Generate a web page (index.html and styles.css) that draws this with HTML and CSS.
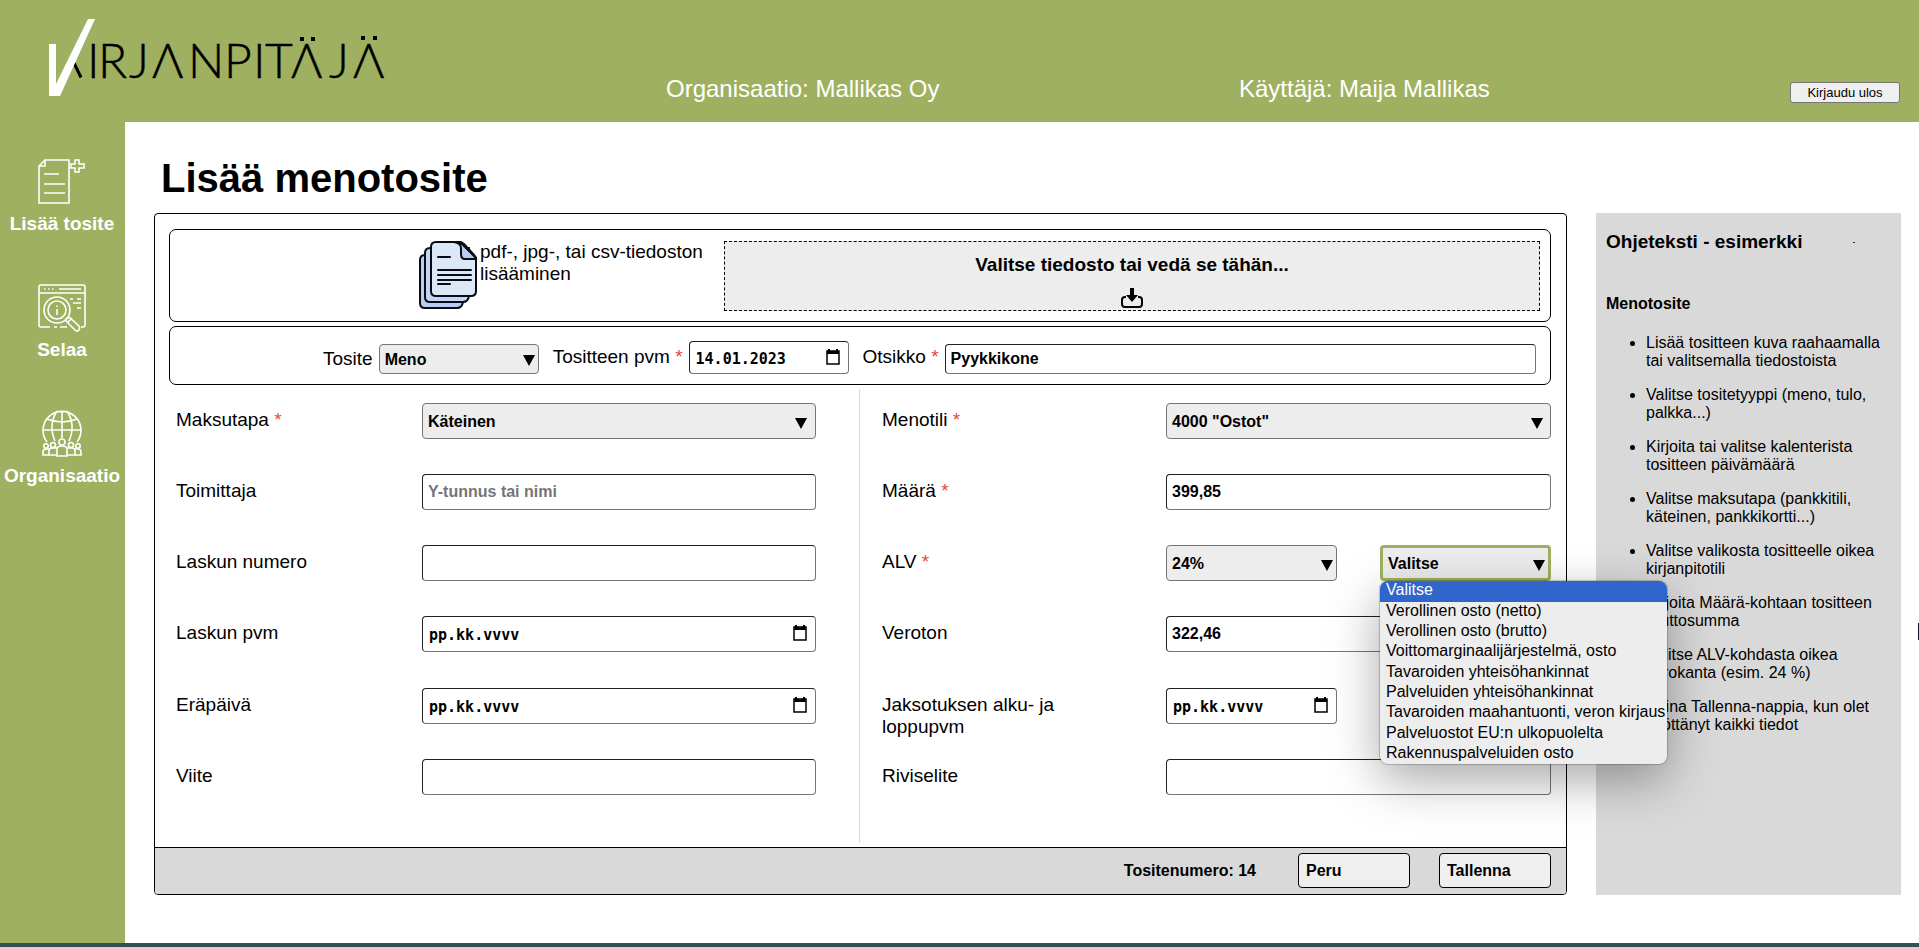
FILE: index.html
```html
<!DOCTYPE html>
<html lang="fi">
<head>
<meta charset="utf-8">
<title>Kirjanpitäjä – Lisää menotosite</title>
<link rel="stylesheet" href="styles.css">
</head>
<body>
<header class="topbar">
  <a class="logo" href="#" aria-label="Kirjanpitäjä">
    <svg width="350" height="90" viewBox="40 12 350 90">
      <path class="logo-leg" d="M74 63L81 77.500"/>
      <path class="logo-check" d="M49 44H56V84L88 19H95L60 96H49Z"/>
      <text class="logo-text" y="78" x="87 98 129 152 188 224 253 265 291 329 353">IRJΛNPITΛJΛ</text>
      <path d="M300 37h4v4h-4zM311 37h4v4h-4zM361 36h4v4h-4zM373 36h4v4h-4z"/>
    </svg>
  </a>
  <p class="topbar-info topbar-org">Organisaatio: Mallikas Oy</p>
  <p class="topbar-info topbar-user">Käyttäjä: Maija Mallikas</p>
  <button class="logout" type="button">Kirjaudu ulos</button>
</header>

<div class="body">
  <nav class="sidebar">
    <a class="nav-item" href="#">
      <svg class="nav-icon" width="48" height="48" viewBox="0 0 48 48">
        <path d="M7 2H31V45H1V8ZM7 2V8H1M6 16H21M6 26H27M6 35H27"/>
        <path d="M37 2h4v4h5v4h-5v4h-4v-4h-4v-4h4z"/>
      </svg>
      <span>Lisää tosite</span>
    </a>
    <a class="nav-item" href="#">
      <svg class="nav-icon" width="48" height="48" viewBox="0 0 48 48">
        <path d="M12 43H3Q1 43 1 41V3Q1 1 3 1H45Q47 1 47 3V41Q47 43 45 43H43M1 9H47M21 5H43M6 5h1.500M10 5h1.500M14 5h1.500M16 43h3M22 43H29"/>
        <circle cx="19" cy="26" r="13"/><circle cx="19" cy="26" r="9"/>
        <path d="M19 25V31M19 21.500V23M28 35L31 33L41 42Q42 44 41 46Q39 48 37 46L28 37ZM30 38L34 34M32 15h3M39 15h4M35 19H43M39 24H43"/>
      </svg>
      <span>Selaa</span>
    </a>
    <a class="nav-item" href="#">
      <svg class="nav-icon" width="48" height="48" viewBox="0 0 48 48">
        <path d="M9 32A19 19 0 1 1 39 32M24 1V28M5 20H43M9 9Q24 15 39 9M19 1Q10 15 17 31M29 1Q38 15 31 31"/>
        <circle cx="24" cy="32" r="3"/><path d="M19 46V39Q19 36 24 36Q29 36 29 39V46Z"/>
        <circle cx="15" cy="35" r="2.500"/><path d="M19 38H14Q11 38 11 41V45H19"/>
        <circle cx="33" cy="35" r="2.500"/><path d="M29 38H34Q37 38 37 41V45H29"/>
        <circle cx="8" cy="36" r="2.200"/><path d="M11 39H8Q5 39 5 42V45H11"/>
        <circle cx="40" cy="36" r="2.200"/><path d="M37 39H40Q43 39 43 42V45H37"/>
      </svg>
      <span>Organisaatio</span>
    </a>
  </nav>

  <main class="main">
    <h1 class="title">Lisää menotosite</h1>
    <div class="columns">
      <form class="voucher">
        <div class="voucher-body">
          <section class="box upload">
            <svg class="files-icon" width="58" height="68" viewBox="0 0 58 68">
              <g stroke="#0b0b14" stroke-width="2">
                <path fill="#b9cdf3" d="M6 14Q1 14 1 19V62Q1 67 6 67H38Q43 67 44 61V14Z"/>
                <path fill="#c4d6f7" d="M11 7Q6 7 6 12V56Q6 61 11 61H44Q49 61 50 55V7Z"/>
                <path fill="#dce8f8" d="M17 1H41L57 17V50Q57 55 52 55H17Q12 55 12 50V6Q12 1 17 1Z"/>
                <path fill="#b9cdf3" d="M35 1H41L57 17V18H46Q42 18 42 13V7Q42 2 35 1Z"/>
                <path fill="none" stroke-linecap="round" d="M19 16H31M19 29H52M19 34H52M19 39H52M19 43H31"/>
              </g>
              <path fill="#fff" d="M45 0H58V14Z"/>
              <path fill="none" stroke="#0b0b14" stroke-width="2" d="M40 1Q43 1 45 3L55 14Q57 16 57 19"/>
            </svg>
            <p class="upload-hint">pdf-, jpg-, tai csv-tiedoston lisääminen</p>
            <button class="dropzone" type="button">
              <span>Valitse tiedosto tai vedä se tähän...</span>
              <svg width="22" height="20" viewBox="0 0 22 20">
                <path fill="none" stroke="#000" stroke-width="2" d="M5 9H4Q1 9 1 12V16Q1 19 4 19H18Q21 19 21 16V12Q21 9 18 9H17"/>
                <path d="M9 0h4v7h4l-6 7-6-7h4z"/>
              </svg>
            </button>
          </section>

          <section class="box summary">
            <label for="tosite">Tosite</label>
            <select class="control select control-small" id="tosite"><option>Meno</option></select>
            <label class="summary-next" for="pvm">Tositteen pvm <span class="req">*</span></label>
            <span class="date control-small"><input class="control" id="pvm" value="14.01.2023"><svg class="cal" viewBox="0 0 14 16"><path d="M1 2h12v13H1z"/><path class="cal-fill" d="M1 2h12v3H1zM2 0h2v2H2zM10 0h2v2h-2z"/></svg></span>
            <label class="summary-next" for="otsikko">Otsikko <span class="req">*</span></label>
            <input class="control control-title" id="otsikko" value="Pyykkikone">
          </section>

          <div class="fields">
            <div class="field-col field-col-left">
              <div class="field"><label for="maksutapa">Maksutapa <span class="req">*</span></label>
                <select class="control select" id="maksutapa"><option>Käteinen</option></select></div>
              <div class="field"><label for="toimittaja">Toimittaja</label>
                <input class="control" id="toimittaja" placeholder="Y-tunnus tai nimi"></div>
              <div class="field"><label for="laskunro">Laskun numero</label>
                <input class="control" id="laskunro"></div>
              <div class="field"><label for="laskupvm">Laskun pvm</label>
                <span class="date"><input class="control" id="laskupvm" value="pp.kk.vvvv"><svg class="cal" viewBox="0 0 14 16"><path d="M1 2h12v13H1z"/><path class="cal-fill" d="M1 2h12v3H1zM2 0h2v2H2zM10 0h2v2h-2z"/></svg></span></div>
              <div class="field"><label for="erapaiva">Eräpäivä</label>
                <span class="date"><input class="control" id="erapaiva" value="pp.kk.vvvv"><svg class="cal" viewBox="0 0 14 16"><path d="M1 2h12v13H1z"/><path class="cal-fill" d="M1 2h12v3H1zM2 0h2v2H2zM10 0h2v2h-2z"/></svg></span></div>
              <div class="field"><label for="viite">Viite</label>
                <input class="control" id="viite"></div>
            </div>
            <div class="field-col field-col-right">
              <div class="field"><label for="menotili">Menotili <span class="req">*</span></label>
                <select class="control select" id="menotili"><option>4000 "Ostot"</option></select></div>
              <div class="field"><label for="maara">Määrä <span class="req">*</span></label>
                <input class="control" id="maara" value="399,85"></div>
              <div class="field"><label for="alv">ALV <span class="req">*</span></label>
                <div class="pair">
                  <select class="control select" id="alv"><option>24%</option></select>
                  <div class="dropdown">
                    <select class="control select select-open" id="alvtyyppi" aria-label="ALV-tyyppi"><option>Valitse</option></select>
                    <ul class="menu" role="listbox">
                      <li class="menu-item menu-item-active" role="option">Valitse</li>
                      <li class="menu-item" role="option">Verollinen osto (netto)</li>
                      <li class="menu-item" role="option">Verollinen osto (brutto)</li>
                      <li class="menu-item" role="option">Voittomarginaalijärjestelmä, osto</li>
                      <li class="menu-item" role="option">Tavaroiden yhteisöhankinnat</li>
                      <li class="menu-item" role="option">Palveluiden yhteisöhankinnat</li>
                      <li class="menu-item" role="option">Tavaroiden maahantuonti, veron kirjaus</li>
                      <li class="menu-item" role="option">Palveluostot EU:n ulkopuolelta</li>
                      <li class="menu-item" role="option">Rakennuspalveluiden osto</li>
                    </ul>
                  </div>
                </div></div>
              <div class="field"><label for="veroton">Veroton</label>
                <input class="control" id="veroton" value="322,46"></div>
              <div class="field"><label for="jakso1">Jaksotuksen alku- ja loppupvm</label>
                <div class="pair">
                  <span class="date"><input class="control" id="jakso1" value="pp.kk.vvvv"><svg class="cal" viewBox="0 0 14 16"><path d="M1 2h12v13H1z"/><path class="cal-fill" d="M1 2h12v3H1zM2 0h2v2H2zM10 0h2v2h-2z"/></svg></span>
                  <input class="control" aria-label="Jaksotuksen loppupvm">
                </div></div>
              <div class="field"><label for="riviselite">Riviselite</label>
                <input class="control" id="riviselite"></div>
            </div>
          </div>
        </div>
        <footer class="voucher-footer">
          <span class="voucher-number">Tositenumero: 14</span>
          <button class="action" type="button">Peru</button>
          <button class="action" type="button">Tallenna</button>
        </footer>
      </form>

      <aside class="help">
        <div class="help-head"><h2 class="help-title">Ohjeteksti - esimerkki</h2><i class="help-dot"></i></div>
        <h3 class="help-subtitle">Menotosite</h3>
        <ul class="help-list">
          <li>Lisää tositteen kuva raahaamalla tai valitsemalla tiedostoista</li>
          <li>Valitse tositetyyppi (meno, tulo, palkka...)</li>
          <li>Kirjoita tai valitse kalenterista tositteen päivämäärä</li>
          <li>Valitse maksutapa (pankkitili, käteinen, pankkikortti...)</li>
          <li>Valitse valikosta tositteelle oikea kirjanpitotili</li>
          <li>Kirjoita Määrä-kohtaan tositteen bruttosumma</li>
          <li>Valitse ALV-kohdasta oikea verokanta (esim. 24 %)</li>
          <li>Paina Tallenna-nappia, kun olet syöttänyt kaikki tiedot</li>
        </ul>
      </aside>
    </div>
  </main>
</div>
<i class="edge-handle"></i>
</body>
</html>
```
FILE: styles.css
```css
*, *::before, *::after { box-sizing: border-box; }

body {
  margin: 0;
  min-height: 100vh;
  display: flex;
  flex-direction: column;
  border-bottom: 4px solid #2f5350;
  background: #fff;
  color: #000;
  font: 16px/18px "Liberation Sans", Arial, sans-serif;
}

h1, h2, h3, p, ul { margin: 0; padding: 0; }
button, input, select { font-family: inherit; color: inherit; }

/* Header */
.topbar {
  height: 122px;
  padding: 0 19px 0 40px;
  display: grid;
  grid-template-columns: 626fr 573fr 551fr 110px;
  align-items: start;
  background: #9fb160;
  color: #fff;
}
.logo { padding-top: 12px; }
.logo svg { display: block; }
.logo-check { fill: #fff; }
.logo-leg { stroke: #000; stroke-width: 3; }
.logo-text { font: 300 48px Lato, sans-serif; fill: #000; stroke: #000; stroke-width: .5; }
.topbar-info { padding-top: 75px; font-size: 24px; line-height: 28px; }
.logout {
  margin-top: 82px;
  height: 21px;
  padding: 0;
  border: 1px solid #767676;
  border-radius: 3px;
  background: #efefef;
  color: #000;
  font-size: 13px;
}

/* Sidebar */
.body { flex: 1; display: flex; }
.sidebar {
  flex: 0 0 125px;
  padding: 36px 1px 0 0;
  display: flex;
  flex-direction: column;
  gap: 49px;
  background: #9fb160;
}
.nav-item {
  display: flex;
  flex-direction: column;
  align-items: center;
  gap: 7px;
  color: #fff;
  font-size: 19px;
  line-height: 22px;
  font-weight: bold;
  text-decoration: none;
}
.nav-icon { fill: none; stroke: #fff; stroke-width: 1.6; }

/* Page */
.main {
  flex: 1;
  min-width: 0;
  padding: 33px 18px 48px 29px;
  display: flex;
  flex-direction: column;
}
.title { padding: 0 7px 12px; font-size: 40px; line-height: 46px; }
.columns { flex: 1; display: flex; gap: 29px; }

.voucher {
  flex: 1;
  display: flex;
  flex-direction: column;
  border: 1px solid #000;
  border-radius: 4px;
}
.voucher-body {
  flex: 1;
  padding: 15px 15px 4px 14px;
  display: flex;
  flex-direction: column;
  gap: 4px;
}
.box { display: flex; border: 1px solid #000; border-radius: 7px; }

/* Upload row */
.upload { height: 93px; padding: 11px 10px 10px 249px; }
.upload-hint {
  width: 247px;
  padding: 0 0 0 3px;
  font-size: 19px;
  line-height: 22px;
}
.files-icon { flex: none; }
.dropzone {
  flex: 1;
  height: 70px;
  padding: 12px 0 0;
  display: flex;
  flex-direction: column;
  align-items: center;
  justify-content: flex-start;
  gap: 12px;
  border: 1px dashed #000;
  background: #ededed;
  font-size: 19px;
  line-height: 22px;
  font-weight: bold;
}

/* Controls */
.control {
  width: 100%;
  height: 36px;
  padding: 0 5px;
  border: 1px solid;
  border-color: #212121 #767676 #767676 #212121;
  border-radius: 4px;
  background: #fff;
  font-size: 16px;
  font-weight: bold;
}
.control::placeholder { color: #757575; opacity: 1; }
.select {
  appearance: none;
  border-color: #767676;
  background: #ededed url("data:image/svg+xml,%3Csvg xmlns='http://www.w3.org/2000/svg' width='12' height='11'%3E%3Cpath d='M0 0h12L6 11z'/%3E%3C/svg%3E") no-repeat 98% 60%;
}
.select-open { border: 3px solid #9fb160; outline: none; }
.date { display: block; position: relative; }
.date .control { padding: 2px 6px 0; font: bold 15px "DejaVu Sans Mono", monospace; }
.cal {
  position: absolute;
  right: 9px;
  top: 50%;
  width: 14px;
  height: 16px;
  margin-top: -9px;
  fill: none;
  stroke: #000;
  stroke-width: 1.5;
}
.cal-fill { fill: #000; stroke: none; }
.req { color: #e5483b; }

/* Voucher summary row */
.summary {
  height: 59px;
  padding: 0 14px 10px 153px;
  align-items: flex-end;
  gap: 6px;
  font-size: 19px;
  line-height: 22px;
}
.summary label { flex: none; padding-bottom: 4px; }
.summary .summary-next { margin-left: 8px; padding-bottom: 6px; }
.control-small { flex: 0 0 160px; width: 160px; }
.summary .control { height: 30px; }
.summary .date .control { height: 33px; }
.summary .control-title { flex: 1; min-width: 0; }

/* Fields */
.fields { flex: 1; display: grid; grid-template-columns: 690fr 692fr; }
.field-col {
  padding-top: 14px;
  padding-bottom: 13px;
  display: grid;
  grid-auto-rows: 1fr;
}
.field { display: grid; align-items: start; }
.field > label {
  max-width: 200px;
  padding-top: 6px;
  font-size: 19px;
  line-height: 22px;
}
.field-col-left { padding-left: 7px; padding-right: 43px; }
.field-col-left .field { grid-template-columns: 246fr 394fr; }
.field-col-right { padding-left: 22px; border-left: 1px solid #d9d9d9; }
.field-col-right .field { grid-template-columns: 284fr 385fr; }
.pair { display: grid; grid-template-columns: 1fr 1fr; gap: 43px; }
.dropdown { position: relative; }
.menu {
  position: absolute;
  z-index: 2;
  top: 36px;
  left: 0;
  width: 287px;
  height: 183px;
  display: grid;
  grid-auto-rows: 1fr;
  overflow: hidden;
  border-radius: 8px;
  background: #ededed;
  box-shadow: 0 0 1px 1px rgba(0, 0, 0, .2), 0 16px 50px rgba(0, 0, 0, .35);
  list-style: none;
}
.menu-item { padding-left: 6px; white-space: nowrap; }
.menu-item-active { background: #3065cb; color: #fff; }

/* Footer */
.voucher-footer {
  height: 47px;
  padding: 5px 15px 0 0;
  display: flex;
  justify-content: flex-end;
  align-items: flex-start;
  gap: 29px;
  border-top: 1px solid #000;
  border-radius: 0 0 3px 3px;
  background: #d9d9d9;
  font-weight: bold;
}
.voucher-number { padding: 9px 13px 0 0; }
.action {
  width: 112px;
  height: 35px;
  padding: 0 7px;
  border: 1px solid #000;
  border-radius: 4px;
  background: #efefef;
  font-size: 16px;
  font-weight: bold;
  text-align: left;
}

/* Help panel */
.help { flex: 0 0 305px; padding: 18px 10px; background: #d9d9d9; }
.help-head { display: flex; align-items: center; gap: 51px; }
.help-title { font-size: 19px; line-height: 22px; }
.help-dot { width: 2px; height: 1px; background: #334; }
.help-subtitle { margin-top: 42px; font-size: 16px; }
.help-list { margin-top: 21px; padding-left: 40px; }
.help-list li { margin-bottom: 16px; }

.edge-handle {
  position: absolute;
  right: 0;
  top: 623px;
  width: 1px;
  height: 17px;
  background: #112;
}
```
